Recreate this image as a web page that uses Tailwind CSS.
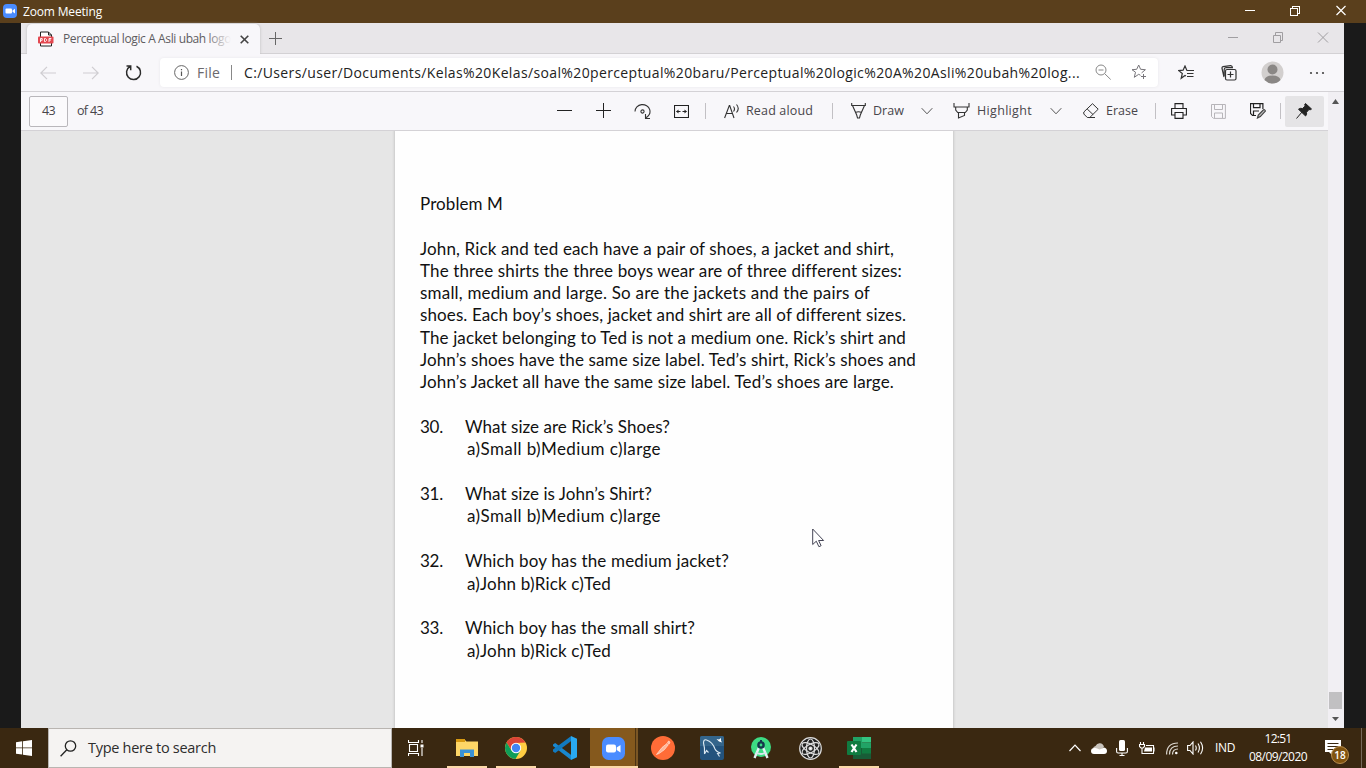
<!DOCTYPE html>
<html lang="en"><head><meta charset="utf-8"><title>Zoom Meeting</title>
<script src="https://cdn.jsdelivr.net/npm/@tailwindcss/browser@4"></script></head>
<body class="w-[1366px] h-[768px] overflow-hidden bg-[#1a1a1a] font-['Open_Sans',sans-serif] flex flex-col">
<!-- Zoom title bar -->
<header class="h-[23px] shrink-0 bg-[#5a3f1c] flex items-center text-white text-[12px] pl-[3px]">
  <svg class="size-[14px] mb-px" viewBox="0 0 14 14"><rect width="14" height="14" rx="4" fill="#4a8cff"/><rect x="2.5" y="4.5" width="6.5" height="5" rx="1" fill="#fff"/><path d="M9.5 6.5 12 4.7v4.8L9.5 7.8z" fill="#fff"/></svg>
  <span class="ml-[6px] whitespace-nowrap" data-w="79">Zoom Meeting</span>
  <svg class="ml-auto mr-[16px] w-[105px] h-[14px] mb-[3px]" viewBox="0 0 105 14" fill="none" stroke="#fff" shape-rendering="crispEdges"><path d="M0 7.5h10M45.500 5.500h7v7h-7zM47.500 5.500v-2h7v7h-2"/><path d="M91.500 3l9 9m0-9l-9 9" shape-rendering="auto" stroke-width="1.200"/></svg>
</header>
<main class="h-[705px] shrink-0 mx-auto w-[1323px] mr-[22px] ml-[21px] flex flex-col bg-[#f8f7fa]">
  <!-- Tab strip -->
  <div class="h-[31px] shrink-0 bg-[#e8e6e9] border-b border-[#d3d1d4] flex items-end">
    <div class="ml-[6px] w-[233px] h-[30px] -mb-px bg-[#f8f7fa] rounded-t-[5px] shadow-[0_0_3px_#bbb] flex items-center text-[12px] text-[#5e5c60] [clip-path:inset(-3px_-3px_0_-3px)]">
      <svg class="ml-[11px] w-[16px] h-[16px] shrink-0" viewBox="0 0 16 16"><path d="M2.500 6V1h8l3 3v2M2.500 12v3h11v-3M10.500 1v3h3" fill="#fff" stroke="#222"/><rect x="0" y="5.500" width="15.500" height="7" rx="1" fill="#e34850"/><path d="M2.500 11V7.500h1.700v1.800H2.500M6.500 7.500v3h1l1-1v-1l-1-1zM11 11V7.500h2.300M11 9h2" fill="none" stroke="#fff" stroke-width=".9"/></svg>
      <div class="relative ml-[9px] w-[168px] overflow-hidden"><span class="whitespace-nowrap" data-w="168">Perceptual logic A Asli ubah logo</span><div class="absolute right-0 top-0 h-full w-[26px] bg-linear-to-r from-[#f8f7fa]/0 to-[#f8f7fa]"></div></div>
      <svg class="ml-[9px] size-[9px]" viewBox="0 0 9 9"><path d="M.7.700l7.600 7.600m0-7.600L.7 8.300" stroke="#444" stroke-width="1.600"/></svg>
    </div>
    <svg class="ml-[9px] mb-[8px] size-[13px]" viewBox="0 0 13 13"><path d="M6.500 0v13M0 6.500h13" stroke="#666"/></svg>
    <svg class="ml-auto mr-[15px] mb-[9px] w-[101px] h-[13px]" viewBox="0 0 101 13" fill="none" stroke="#a09ea1"><path d="M0 6.500h10M45.500 4.500h7v7h-7zM47.500 4.500v-3h7v8h-2M90 1.500l10 10m0-10l-10 10"/></svg>
  </div>
  <!-- Address row -->
  <div class="h-[38px] shrink-0 border-b border-[#d4d2d6] flex items-center">
    <svg class="ml-[19px] w-[16px] h-[14px]" viewBox="0 0 16 14" fill="none" stroke="#cfcdd1" stroke-width="1.200"><path d="M16 7H1M7 .800.800 7 7 13.200"/></svg>
    <svg class="ml-[27px] w-[16px] h-[14px]" viewBox="0 0 16 14" fill="none" stroke="#cfcdd1" stroke-width="1.200"><path d="M0 7h15M9 .800 15.200 7 9 13.200"/></svg>
    <svg class="ml-[26px] size-[17px]" viewBox="0 0 17 17" fill="none" stroke="#2c2c2c" stroke-width="1.500"><path d="M11.500 2.200A7 7 0 1 1 5 2.500M1.500 2h4.200v4.200"/></svg>
    <div class="ml-[18px] w-[998px] h-[29px] bg-white rounded-[4px] shadow-[0_0_3px_#e8e6ea] flex items-center text-[14px]">
      <svg class="ml-[14px] size-[15px]" viewBox="0 0 15 15"><circle cx="7.500" cy="7.500" r="6.900" fill="none" stroke="#666"/><path d="M7.500 6.500V11M7.500 4v1.200" stroke="#555" stroke-width="1.200"/></svg>
      <span class="ml-[8px] w-[24px] text-[#6b696d] whitespace-nowrap" data-w="23">File</span>
      <i class="ml-[10px] w-px h-[15px] bg-[#888]"></i>
      <span class="ml-[12px] w-[836px] text-[#222] whitespace-nowrap" data-w="836">C:/Users/user/Documents/Kelas%20Kelas/soal%20perceptual%20baru/Perceptual%20logic%20A%20Asli%20ubah%20log...</span>
      <svg class="ml-auto size-[17px] shrink-0" viewBox="0 0 17 17" fill="none" stroke="#888"><circle cx="6" cy="6" r="5"/><path d="M3.500 6h5M9.700 9.700l6 5.800"/></svg>
      <svg class="ml-[19px] mr-[10px] size-[17px] shrink-0" viewBox="0 0 17 17" fill="none" stroke="#77757a"><path d="M9.500 11.300l-1.800-1-4.400 3 1.200-5.100L1 5.700l4.700-.4L7.700 1l1.900 4.300 4.800.4-3.800 3.200M12.500 10v5M10 12.500h5"/></svg>
    </div>
    <svg class="ml-[20px] size-[16px]" viewBox="0 0 16 16" fill="none" stroke="#333" stroke-width="1.200"><path d="M8 11l-1-.5-3.800 2.800 1.100-4.800L.7 5.600l4.400-.4L7 1l1.800 4.200M8.500 5.500H16M9 8.500h6.500M9 11.500h6.500"/></svg>
    <svg class="ml-[27px] size-[16px]" viewBox="0 0 16 16" fill="none" stroke="#333" stroke-width="1.200"><rect x="4.500" y="4.500" width="10.500" height="10.500" rx="1.500"/><path d="M9.500 6.500v6M6.500 9.500h6M3 12 1 3.500Q.8 2 2 1.700L9.500.600Q11 .500 11.500 2.500M3.200 11V4.500Q3.200 2.700 5 2.600h7"/></svg>
    <svg class="ml-[24px] size-[23px]" viewBox="0 0 23 23"><circle cx="11.500" cy="11.500" r="11" fill="#d2cfce"/><circle cx="11.500" cy="8.500" r="5" fill="#8a8785"/><path d="M3.500 19q1-4.500 8-4.500t8 4.500Q16 22.500 11.500 22.500T3.500 19" fill="#8a8785"/></svg>
    <svg class="ml-[25px] w-[16px] h-[4px]" viewBox="0 0 16 4" fill="#444"><circle cx="2" cy="2" r="1.100"/><circle cx="8" cy="2" r="1.100"/><circle cx="14" cy="2" r="1.100"/></svg>
  </div>
  <div class="flex h-[636px]">
   <div class="w-[1307px] flex flex-col">
    <!-- PDF toolbar -->
    <div class="h-[39px] shrink-0 border-b border-[#d4d2d6] flex items-center text-[12.5px] text-[#48464b]">
      <div class="ml-[8px] w-[39px] h-[31px] bg-[#fbfafc] border border-[#b9b7bb] rounded-[2px] flex items-center justify-center"><span data-w="13">43</span></div>
      <div class="ml-[9px] w-[27px] whitespace-nowrap"><span data-w="26">of 43</span></div>
      <svg class="ml-[453px] size-[16px]" viewBox="0 0 16 16"><path d="M0 7.500h15" stroke="#222"/></svg>
      <svg class="ml-[23px] size-[16px]" viewBox="0 0 16 16"><path d="M0 7.500h15M7.500 0v15" stroke="#222"/></svg>
      <svg class="ml-[22px] size-[17px]" viewBox="0 0 17 17" fill="none" stroke="#333" stroke-width="1.100"><path d="M1 8.500A7.500 7 0 1 1 11.500 15M11.500 11v4.500H16"/><circle cx="8.500" cy="8.500" r="1.600"/></svg>
      <svg class="ml-[23px] w-[15px] h-[13px]" viewBox="0 0 15 13" fill="none" stroke="#222" stroke-width="1.100"><path d="M.5.500h14v12H.5zM2.500 6.500h4M8.500 6.500h4" /><path d="M4.500 4.500v4l-2.300-2zM10.500 4.500v4l2.300-2z" fill="#222" stroke="none"/></svg>
      <i class="ml-[16px] w-px h-[16px] bg-[#c2c0c4]"></i>
      <svg class="ml-[18px] w-[16px] h-[16px]" viewBox="0 0 16 16" fill="none" stroke="#333" stroke-width="1.100"><path d="M.6 15 5.300 2.500h.4L10 15M2.300 10.500h6.300M9.500 3.500q2 2.500 0 5M12.500 1.500q3.500 4 0 8"/></svg>
      <div class="ml-[6px] w-[68px] whitespace-nowrap"><span data-w="67">Read aloud</span></div>
      <i class="ml-[18px] w-px h-[16px] bg-[#c2c0c4]"></i>
      <svg class="ml-[18px] w-[15px] h-[16px]" viewBox="0 0 15 16" fill="none" stroke="#333" stroke-width="1.100"><path d="M.7 0v2.500h13.600V0M1.500 2.500l4.200 9.500L6.500 15h2l.8-3 4.200-9.500M4.500 9.500q3-1.500 6 0"/></svg>
      <div class="ml-[7px] w-[31px] whitespace-nowrap"><span data-w="31">Draw</span></div>
      <svg class="ml-[17px] w-[12px] h-[8px]" viewBox="0 0 12 8" fill="none" stroke="#555"><path d="M.7 1.200 6 6.800l5.300-5.600"/></svg>
      <svg class="ml-[20px] w-[17px] h-[16px]" viewBox="0 0 17 16" fill="none" stroke="#333" stroke-width="1.100"><path d="M1 0v4h15V0M2.700 4v3l2 2.500h7.600l2-2.500V4M5.500 9.500V15l6-2.500v-3"/></svg>
      <div class="ml-[7px] w-[56px] whitespace-nowrap"><span data-w="55">Highlight</span></div>
      <svg class="ml-[17px] mr-px w-[12px] h-[8px]" viewBox="0 0 12 8" fill="none" stroke="#555"><path d="M.7 1.200 6 6.800l5.300-5.600"/></svg>
      <svg class="ml-[20px] w-[17px] h-[16px]" viewBox="0 0 17 16" fill="none" stroke="#333"><path d="M.8 9 9.500.700l5.700 5.500-8.400 8.300H4.300L.8 11zM4.200 6l5.900 5.600M6 14.500h6"/></svg>
      <div class="ml-[6px] w-[33px] whitespace-nowrap"><span data-w="32">Erase</span></div>
      <i class="ml-[16px] w-px h-[16px] bg-[#c2c0c4]"></i>
      <svg class="ml-[15px] size-[16px]" viewBox="0 0 16 16" fill="none" stroke="#222" stroke-width="1.100"><path d="M4 5V.600h8V5M4 12H.600V5.500h14.800V12H12M4 9.500h8v5.900H4z"/></svg>
      <svg class="ml-[24px] size-[15px]" viewBox="0 0 15 15" fill="none" stroke="#b7b5b9"><path d="M.5.500h13.900v13.900H2.500l-2-2zM3.500.500v5h8v-5M3.500 14V9h8v5"/></svg>
      <svg class="ml-[24px] w-[16px] h-[16px]" viewBox="0 0 16 16" fill="none" stroke="#222" stroke-width="1.200"><path d="M6 12.500H2.500l-2-2V.600h12.400V6M3.500.600v4h6.500v-4M3.500 12.500V8h5.500"/><path d="M7.500 15l.8-3 5.200-5.200q1.500-.5 1.900 1.300l-5.100 5.500z" fill="#bbb" stroke="#444"/></svg>
      <i class="ml-[14px] w-px h-[16px] bg-[#c2c0c4]"></i>
      <div class="ml-[4px] w-[39px] h-[31px] rounded-[2px] bg-[#e5e4e6] flex items-center justify-center shrink-0"><svg class="size-[16px] mr-[2px]" viewBox="0 0 16 16"><path d="M9.500.500 15.500 6l-1.300.8-1.200-.3-2.500 2.800q.7 2-.9 3.700L2.500 6.300q1.500-1.500 4-.8L9.200 3 8.700 1.500zM6 9 .5 15.500" fill="#222" stroke="#222"/></svg></div>
    </div>
    <!-- Document -->
    <div class="h-[597px] bg-[#e6e6e6] flex">
      <article class="ml-[374px] w-[558px] h-full bg-[#fefefe] shadow-[0_0_2px_1px_#c9c9c9] [clip-path:inset(0_-4px)] pl-[25px] pt-[62px] font-[Lato,sans-serif] text-[17px] leading-[22.3px] text-[#111] whitespace-nowrap">
        <p><span data-w="83">Problem M</span></p>
        <p class="mt-[22.300px]"><span data-w="474">John, Rick and ted each have a pair of shoes, a jacket and shirt,</span><br><span data-w="482">The three shirts the three boys wear are of three different sizes:</span><br><span data-w="450">small, medium and large. So are the jackets and the pairs of</span><br><span data-w="486">shoes. Each boy’s shoes, jacket and shirt are all of different sizes.</span><br><span data-w="486">The jacket belonging to Ted is not a medium one. Rick’s shirt and</span><br><span data-w="496">John’s shoes have the same size label. Ted’s shirt, Rick’s shoes and</span><br><span data-w="474">John’s Jacket all have the same size label. Ted’s shoes are large.</span></p>
        <div class="mt-[22.300px] flex"><div class="w-[45px]"><span data-w="23">30.</span></div><div><span data-w="205">What size are Rick’s Shoes?</span><div class="pl-[2px]"><span data-w="194">a)Small b)Medium c)large</span></div></div></div>
        <div class="mt-[22.500px] flex"><div class="w-[45px]"><span data-w="23">31.</span></div><div><span data-w="187">What size is John’s Shirt?</span><div class="pl-[2px]"><span data-w="194">a)Small b)Medium c)large</span></div></div></div>
        <div class="mt-[22.700px] flex"><div class="w-[45px]"><span data-w="23">32.</span></div><div><span data-w="264">Which boy has the medium jacket?</span><div class="pl-[2px]"><span data-w="144">a)John b)Rick c)Ted</span></div></div></div>
        <div class="mt-[22.300px] flex"><div class="w-[45px]"><span data-w="23">33.</span></div><div><span data-w="230">Which boy has the small shirt?</span><div class="pl-[2px]"><span data-w="144">a)John b)Rick c)Ted</span></div></div></div>
      </article>
    </div>
   </div>
   <!-- Scrollbar -->
   <div class="w-[16px] bg-[#f1eff3] flex flex-col items-center">
     <svg class="mt-[7px] mr-[2px] w-[7px] h-[5px]" viewBox="0 0 7 5"><path d="M0 5 3.500 0 7 5z" fill="#555"/></svg>
     <div class="mt-auto mr-px w-[13px] h-[17px] bg-[#c1c0c2]"></div>
     <svg class="mt-[8px] mr-[2px] mb-[7px] w-[7px] h-[4px]" viewBox="0 0 7 4"><path d="M0 0 3.500 4 7 0z" fill="#555"/></svg>
   </div>
  </div>
</main>
<!-- Mouse pointer -->
<svg class="absolute left-[812px] top-[528px] w-[13px] h-[20px]" viewBox="0 0 13 20"><path d="M.7 1v15.500l3.600-3.300 2.600 5.500 2.200-1-2.500-5.200h5z" fill="#fff" stroke="#445"/></svg>
<!-- Taskbar -->
<footer class="h-[40px] shrink-0 bg-[#3a2811] flex items-center text-white">
  <div class="w-[48px] flex justify-center"><svg class="size-[16px]" viewBox="0 0 16 16" fill="#fff"><path d="M0 2.200 6.200 1.300V7.500H0zM7 1.200 16 0v7.500H7zM0 8.300h6.200v6.200L0 13.700zM7 8.300h9V16l-9-1.300z"/></svg></div>
  <div class="w-[344px] h-full bg-[#f5f3f2] border border-[#b9b5b1] flex items-center text-[15px] text-[#2d2d2d]">
    <svg class="ml-[11px] size-[17px]" viewBox="0 0 17 17" fill="none" stroke="#222" stroke-width="1.300"><circle cx="10.500" cy="6" r="5.200"/><path d="M6.800 9.700.6 16.200"/></svg>
    <span class="ml-[11px] whitespace-nowrap text-[14.5px]" data-w="128">Type here to search</span>
  </div>
  <div class="w-[48px] flex justify-center"><svg class="size-[16px]" viewBox="0 0 16 16" fill="none" stroke="#fff" stroke-width="1.100"><path d="M.5 0v2.500h10V0M.5 16v-2.500h10V16M1.500 4.500h8v7h-8zM14 0v3M14 8v8"/><path d="M12.500 4.500h3v3h-3z" fill="#fff" stroke="none"/></svg></div>
  <div class="ml-[7px] w-[40px] h-full border-b-2 border-[#fbd9a8] pt-[2px] flex items-center justify-center"><svg class="w-[22px] h-[19px]" viewBox="0 0 22 19"><path d="M0 1h9l1.500 1.500H22V17H0z" fill="#fdd667"/><path d="M0 0h9v3H0z" fill="#d89a12"/><path d="M4 18v-7.500h14V18h-4v-4H8v4z" fill="#3a92d6"/></svg></div>
  <div class="ml-[9px] w-[40px] h-full border-b-2 border-[#fbd9a8] pt-[2px] flex items-center justify-center"><svg class="size-[22px]" viewBox="0 0 22 22"><circle cx="11" cy="11" r="11" fill="#ffcd42"/><path d="M1.500 5.500A11 11 0 0 1 20.500 5.500L11 6l-4.500 7.500z" fill="#db4437"/><path d="M1.500 5.500A11 11 0 0 0 10.500 22L15.500 13.500 6.500 13.500z" fill="#0f9d58"/><circle cx="11" cy="11" r="5.200" fill="#fff"/><circle cx="11" cy="11" r="4.200" fill="#4285f4"/></svg></div>
  <div class="ml-[5px] w-[48px] flex justify-center"><svg class="size-[24px]" viewBox="0 0 24 24"><path d="M0 8.500 2.200 7l16 12V24L0 10z" fill="#1988d0"/><path d="M0 15.500 2.200 17l16-12V0L0 13.500z" fill="#127abf"/><path d="M18 0l6 2.700v18.600L18 24z" fill="#29a9f0"/></svg></div>
  <div class="ml-px w-[48px] h-full border-b-2 border-[#fbd9a8] bg-[#85591d] flex items-center"><div class="w-[45px] pl-[12px] pt-[2px]"><svg class="size-[23px]" viewBox="0 0 23 23"><rect width="23" height="23" rx="6.500" fill="#4a8cff"/><rect x="4" y="7.500" width="10" height="8" rx="2" fill="#fff"/><path d="M14.700 10.500 18.500 8v7.500l-3.800-2.600z" fill="#fff"/></svg></div><div class="w-[3px] h-full border-l border-[#4c3312] bg-[#7b5624]"></div></div>
  <div class="ml-px w-[48px] flex justify-center"><svg class="size-[24px]" viewBox="0 0 24 24"><circle cx="12" cy="12" r="12" fill="#ff6c37"/><path d="M5.500 18.500 11 11.500l5-4 1.300 1.300-4 5-5.300 3.700zM16.500 7l1-2 1.500 1-.8 2z" fill="#ffb799" stroke="#fff0ea" stroke-width=".6"/></svg></div>
  <div class="ml-px w-[48px] flex justify-center"><svg class="size-[24px]" viewBox="0 0 24 24"><rect width="24" height="24" rx="2" fill="#23537d"/><path d="M0 2q0-2 2-2h20q2 0 2 2v8H0z" fill="#34658b"/><path d="M4.500 18Q5 12 3.500 7q0-4 3-3 6 2 8.500 9 1 2.500 5.500 4l-3 .5 2 3M4.500 18l2-3.500 2 2" fill="none" stroke="#dbe9f2" stroke-width="1.100"/><path d="M16.500 3l2.500.5L21 2v2.500l1 2-3-1z" fill="#fff"/></svg></div>
  <div class="ml-px w-[48px] flex justify-center"><svg class="w-[20px] h-[22px]" viewBox="0 0 20 22"><circle cx="10" cy="10" r="10" fill="#3ddc84"/><path d="M8 10.500 3.500 21M12 10.500 16.500 21" stroke="#e4f1f5" stroke-width="2.400"/><path d="M5 15.500q5 3 10 0" fill="none" stroke="#d6e7ed" stroke-width="1.800"/><circle cx="10" cy="8" r="2.600" fill="#3ddc84" stroke="#15374c" stroke-width="2.400"/><path d="M9 3h2v3H9z" fill="#15374c"/></svg></div>
  <div class="ml-px w-[48px] flex justify-center"><svg class="size-[23px]" viewBox="0 0 23 23" fill="none" stroke="#ddd" stroke-width="1.200"><circle cx="11.500" cy="11.500" r="10.800" fill="#222"/><ellipse cx="11.500" cy="11.500" rx="4" ry="9.500"/><ellipse cx="11.500" cy="11.500" rx="4" ry="9.500" transform="rotate(60 11.500 11.500)"/><ellipse cx="11.500" cy="11.500" rx="4" ry="9.500" transform="rotate(120 11.500 11.500)"/><circle cx="11.500" cy="11.500" r="1.500" fill="#fff"/></svg></div>
  <div class="ml-[5px] w-[40px] h-full border-b-2 border-[#fbd9a8] pt-[2px] flex items-center justify-center"><svg class="w-[24px] h-[22px]" viewBox="0 0 24 22"><path d="M6 0h9v11H6z" fill="#21a366"/><path d="M15 0h9v5.500h-9z" fill="#33c481"/><path d="M15 5.500h9V11h-9z" fill="#21a366"/><path d="M6 11h18v11H6z" fill="#185c37"/><path d="M15 11h9v5.500h-9z" fill="#107c41"/><rect y="4" width="14" height="14" rx="1" fill="#107c41"/><path d="M4.500 7.500l5 7.500M9.500 7.500l-5 7.500" stroke="#fff" stroke-width="2.200"/></svg></div>
  <!-- Tray -->
  <svg class="ml-auto w-[12px] h-[8px]" viewBox="0 0 12 8" fill="none" stroke="#fff" stroke-width="1.200"><path d="M.5 7 6 1.200 11.500 7"/></svg>
  <svg class="ml-[10px] w-[16px] h-[11px]" viewBox="0 0 16 11"><path d="M2 6Q2 3.500 4.500 3 6 0 9 .300q3 0 4 3.700L8 8z" fill="#c9c4bd"/><path d="M3 11Q0 11 0 8t3.500-3q2-.5 5 1.500L13 4.500q3 .5 3 3.500t-3 3z" fill="#fff"/></svg>
  <svg class="ml-[9px] w-[12px] h-[16px]" viewBox="0 0 12 16"><rect x="3" width="6" height="11" rx="1.500" fill="#fff"/><path d="M.6 8v3.500q0 1.500 1.500 1.500h7.800q1.500 0 1.500-1.500V8M6 13v2.500M3.500 15.500h5" fill="none" stroke="#fff" stroke-width="1.100"/></svg>
  <svg class="ml-[11px] w-[16px] h-[13px]" viewBox="0 0 16 13"><path d="M1.500 0v2.500M4.500 0v2.500M.5 2.500h5v2l-1.500 1.500H2L.5 4.500zM3 6v5.500h11.500V3.500H7M15 5.500v4" fill="none" stroke="#fff" stroke-width="1.100"/><path d="M6 5.500h7v4H5z" fill="#fff"/></svg>
  <svg class="ml-[11px] w-[12px] h-[13px]" viewBox="0 0 12 13" fill="none" stroke="#ddd8d0" stroke-width="1.200"><path d="M.6 12.500Q.6 1 12 1M3.500 12.500Q3.500 4 12 4M6.500 12.500Q6.500 7 12 7"/><circle cx="10.300" cy="11" r="1.300" fill="#fff" stroke="none"/></svg>
  <svg class="ml-[9px] w-[17px] h-[14px]" viewBox="0 0 17 14" fill="none" stroke="#fff" stroke-width="1.100"><path d="M.6 4.500H3l3-3.500v12L3 9.500H.600zM8.500 4.500q1.500 2.500 0 5M11 2.500q2.800 4.500 0 9M13.500.700q4.200 6.300 0 12.600"/></svg>
  <span class="ml-[11px] w-[20px] text-[12px] whitespace-nowrap" data-w="20">IND</span>
  <div class="ml-[13px] w-[60px] text-center text-[12px] leading-[18px] whitespace-nowrap"><span data-w="27">12:51</span><br><span data-w="58">08/09/2020</span></div>
  <div class="relative ml-[17px] w-[16px] h-[16px]"><svg class="size-[16px]" viewBox="0 0 16 16"><path d="M0 0h16v12H8v4l-4-4H0z" fill="#fff"/><path d="M2.500 3.500h11M2.500 6.500h11M2.500 9.500h7" stroke="#3a2811"/></svg>
    <div class="absolute left-[6px] top-[6px] size-[18px] rounded-full bg-[#80530f] border border-[#b98e4f] text-[10px] leading-[16px] font-semibold text-center">18</div></div>
  <i class="ml-[20px] mr-[4px] w-px h-full bg-[#75695a]"></i>
</footer>
<script>
// Track each line of text to its set measure, given in pixels by data-w.
function fitText() {
  for (const el of document.querySelectorAll('[data-w]')) {
    el.style.letterSpacing = '0px';
    const range = document.createRange();
    range.selectNodeContents(el);
    let spacing = 0;
    for (let pass = 0; pass < 3; pass++) {
      spacing += (Number(el.dataset.w) - range.getBoundingClientRect().width) / el.textContent.length;
      el.style.letterSpacing = spacing + 'px';
    }
  }
}
addEventListener('load', () => {
  fitText();
  document.fonts.ready.then(fitText);
  requestAnimationFrame(fitText);
});
</script>
</body></html>
